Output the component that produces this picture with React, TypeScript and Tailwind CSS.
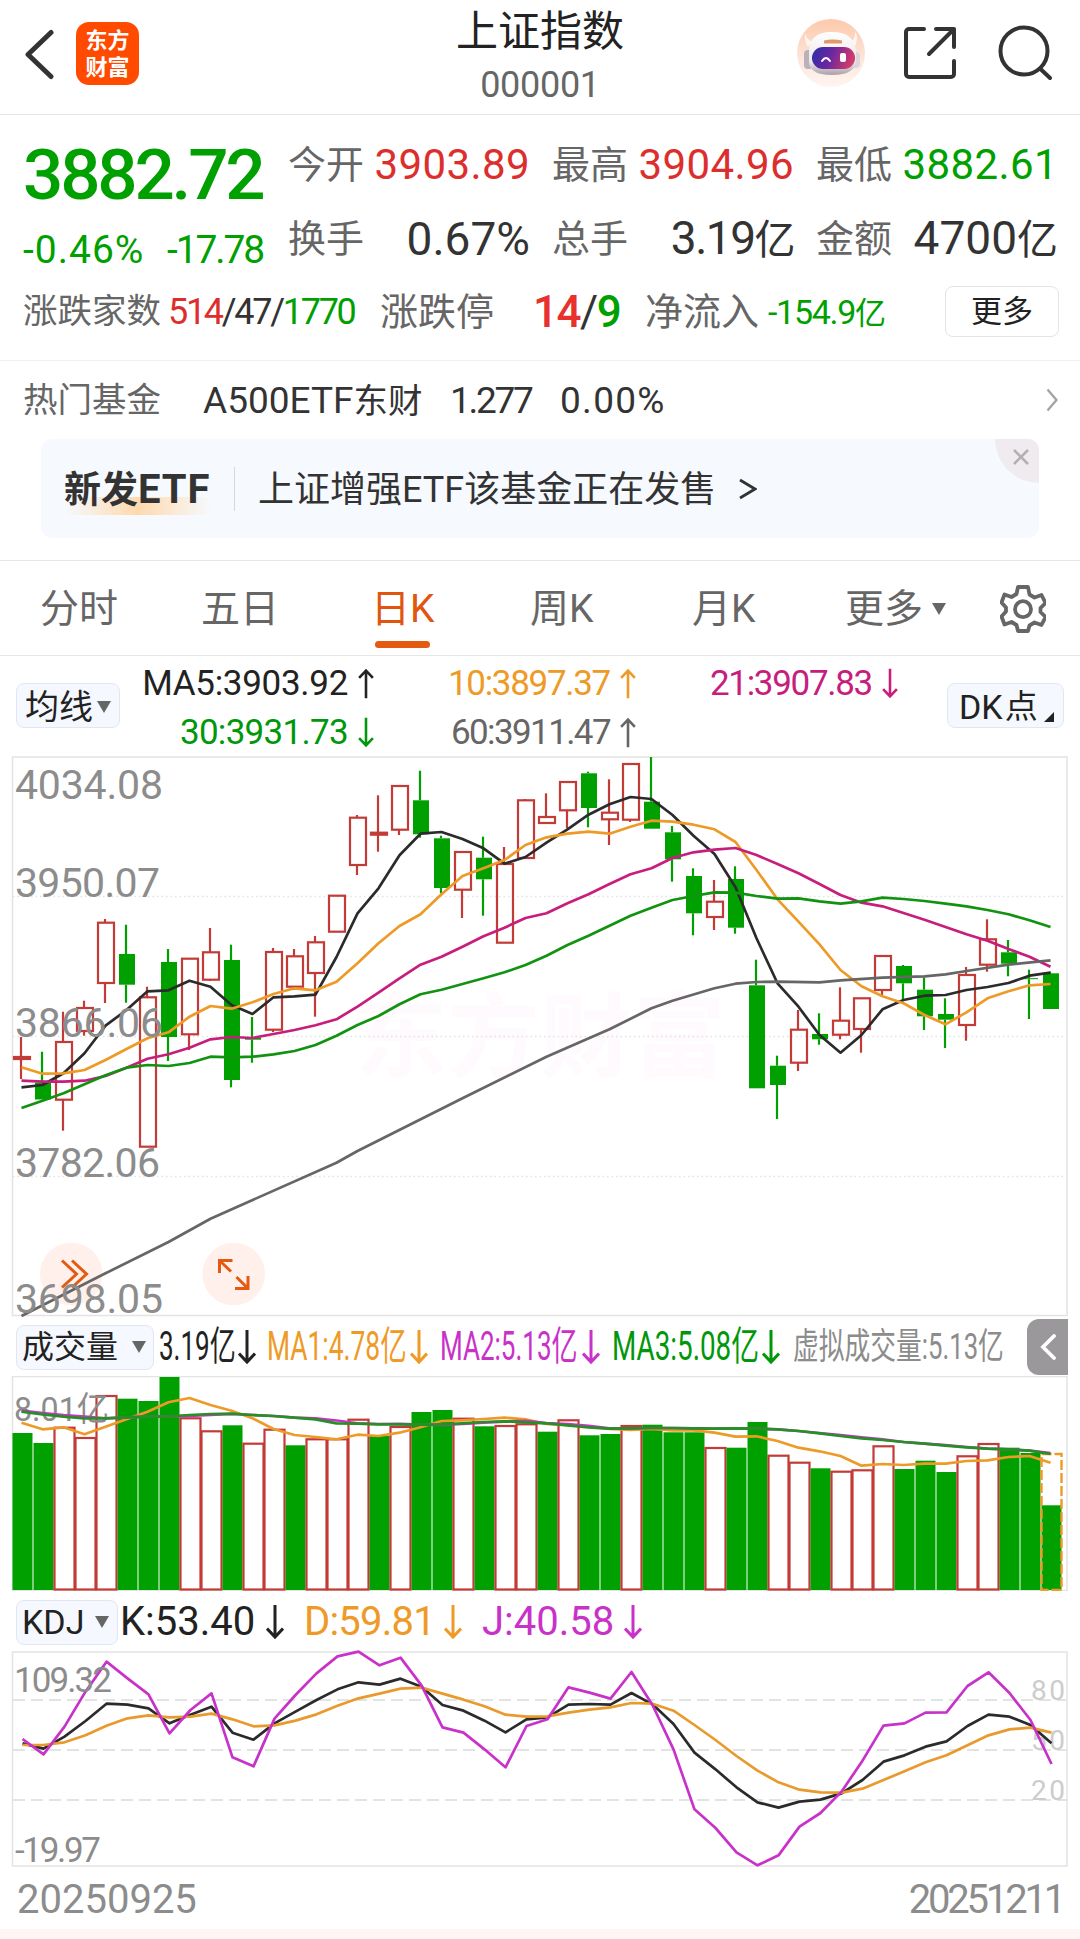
import type { ReactNode } from "react";
import clsx from "clsx";

const GREEN = "#00a000";
const RED = "#c23b37";
const ORANGE = "#ee9a27";
const MAGENTA = "#c71e7d";
const PURPLE = "#c832c8";
const INK = "#2b2b2b";

const STEP = 21;
const centerOf = (i: number) => 21 + i * STEP;

// [direction, body top, body bottom, high, low]
type Candle = ["up" | "down", number, number, number, number];

const candles: Candle[] = [
  ["up", 1057, 1059, 1037, 1079],
  ["down", 1082.7, 1099.5, 1051.7, 1099.5],
  ["up", 1042, 1099.7, 1011.7, 1130.7],
  ["up", 1008, 1031, 1000.7, 1035.7],
  ["up", 922.7, 983, 919, 1003],
  ["down", 954, 984.7, 924.7, 1002.7],
  ["up", 997.3, 1146.7, 986.7, 1146.7],
  ["down", 962, 1037, 949, 1061],
  ["up", 958.7, 1034.3, 958.7, 1050],
  ["up", 952.3, 979.7, 928, 981],
  ["down", 960, 1080, 944.7, 1087.3],
  ["down", 1037.7, 1039.7, 1017, 1062.7],
  ["up", 952, 1029.7, 948, 1032],
  ["up", 956.3, 986.7, 949, 990],
  ["up", 942.3, 973, 936, 1016.7],
  ["up", 895.7, 931.7, 895.7, 931.7],
  ["up", 817.7, 865, 815, 875],
  ["up", 832.7, 834.7, 795.3, 851.7],
  ["up", 786, 829.7, 786, 835],
  ["down", 800.3, 834.3, 770.7, 837.7],
  ["down", 838.3, 888, 835.7, 893.3],
  ["up", 852, 889.7, 851, 918],
  ["down", 857.7, 879.3, 836.7, 915.7],
  ["up", 864, 942.7, 847, 942.7],
  ["up", 800.3, 858, 799, 858],
  ["up", 817, 823, 793.3, 823],
  ["up", 782, 810.3, 782, 828.3],
  ["down", 773.3, 808, 771.7, 827.3],
  ["up", 812.7, 819.3, 779.3, 845],
  ["up", 764, 819.7, 763, 822],
  ["down", 801.7, 828.7, 757, 828.7],
  ["down", 832.3, 859.3, 826, 881.7],
  ["down", 876, 913.3, 868.3, 935.3],
  ["up", 901.7, 917, 880, 930],
  ["down", 879, 927.7, 866.3, 933.7],
  ["down", 985.3, 1088.3, 959.7, 1088.3],
  ["down", 1065.7, 1085, 1055.7, 1119],
  ["up", 1029.7, 1062.7, 1010, 1071],
  ["down", 1034, 1039.3, 1013.3, 1044.7],
  ["up", 1020.7, 1034.7, 987.3, 1039.3],
  ["up", 998.3, 1029, 998.3, 1052.7],
  ["up", 956, 990, 956, 995],
  ["down", 966, 983.3, 965, 999.3],
  ["down", 989.7, 1016.3, 977.3, 1030],
  ["down", 1014, 1019.7, 998.3, 1048],
  ["up", 975, 1025, 967, 1040.7],
  ["up", 939.3, 964.7, 919.3, 971.7],
  ["down", 952.3, 963.7, 940, 976.3],
  ["down", 978.2, 979.2, 969.7, 1019],
  ["down", 973.3, 1009, 971.7, 1009],
];

const ma5 = [
  1087.3, 1085, 1073.3, 1053.3, 1025.7, 1010, 991.3, 990.3, 980.7, 986.7, 1005, 1014, 997.3, 996.3,
  994.7, 957, 913.3, 888.3, 855.3, 833.7, 832, 839, 848.3, 863.7, 857, 842.7, 829.3, 814.7, 804.3,
  797, 799, 815, 835.7, 854, 887.3, 938.3, 983.3, 1006.7, 1035, 1052.7, 1035, 1009.3, 1000, 995.7,
  995, 990, 987, 983, 975.7, 972.7,
];
const ma10 = [
  1067.3, 1073.7, 1073.3, 1070, 1060, 1049, 1038.3, 1032.3, 1016.7, 1006, 1008.7, 1002.3, 994, 988.3,
  990.3, 981.7, 963.3, 943.3, 926, 914.3, 894.3, 876, 868.3, 860, 845, 837.3, 833.7, 831.7, 833.7,
  826.7, 820.7, 821.7, 824.7, 829.3, 842, 870, 899.3, 921.7, 944.3, 970, 986.3, 996.3, 1003.3, 1015,
  1024.3, 1012.3, 998.3, 991.3, 985.3, 984,
];
const ma21 = [
  1080.7, 1081.7, 1081.7, 1080.7, 1076, 1067.7, 1058.7, 1054.3, 1047.7, 1039.3, 1037, 1038, 1034,
  1030, 1025.3, 1019.3, 1006.7, 992.7, 978.3, 964.7, 956.7, 946.7, 936.3, 927.7, 918, 913.3, 903.3,
  894.3, 884, 874.3, 868.3, 858, 852.3, 849.7, 848, 855, 864, 873.3, 884, 895, 902.7, 906.3, 913,
  919.7, 927, 934.3, 940.7, 949, 956.7, 966.7,
];
const ma30 = [
  1108, 1100.7, 1093.3, 1084.3, 1075.3, 1067.7, 1065, 1066, 1063, 1056.7, 1057.3, 1056.7, 1054.3,
  1051, 1045, 1035.7, 1025, 1016, 1004.3, 994.3, 989.7, 984, 978.3, 972.3, 965, 955.7, 945, 935.7,
  925.7, 915.7, 907.7, 900, 896, 892.3, 892.7, 896, 898.7, 898.3, 901.3, 903.7, 901.3, 897.7, 899,
  901, 903.7, 906.3, 910, 914.3, 920.3, 927,
];
// the 60 day average is smooth enough to keep only its turning points
const ma60: [number, number][] = [
  [0, 1316], [4, 1273.3], [7, 1242], [9, 1218.7], [15, 1162.7], [16, 1151], [21, 1098.3],
  [25, 1056.7], [28, 1029.3], [30, 1008.3], [31, 1000.7], [33, 988.3], [34, 983.7], [35, 982],
  [36, 981.7], [38, 982.3], [39, 980.3], [41, 977.7], [43, 976.3], [44, 974.3], [45, 971],
  [47, 964.7], [49, 960.3],
];

const volumeTops = [
  1433, 1443, 1427.7, 1438, 1396, 1398.7, 1401, 1377, 1418.3, 1431.3, 1425.3, 1443.7, 1429.7, 1445.3,
  1439.3, 1439.3, 1419.7, 1436, 1427, 1412, 1410, 1418.7, 1426.3, 1426, 1424.3, 1431.7, 1420.3,
  1435.3, 1434, 1426, 1424.7, 1432.3, 1432.3, 1448, 1447.7, 1422, 1455.7, 1462.7, 1468.3, 1471.7,
  1470.3, 1446.3, 1469, 1460.7, 1472, 1456.3, 1444, 1447.7, 1453, 1505.3,
];
const volumeUp = [
  2, 3, 4, 8, 9, 11, 12, 14, 15, 16, 18, 21, 23, 24, 26, 29, 33, 36, 37, 39, 40, 41, 45, 46,
];
const volMa1 = [
  1422.7, 1429.3, 1427.3, 1434.3, 1426.7, 1419.3, 1411.7, 1402.3, 1398, 1405, 1410.7, 1418.3, 1429,
  1435, 1437, 1439.3, 1434.7, 1436, 1432.7, 1427.3, 1421, 1420.3, 1419, 1417.7, 1419.3, 1424, 1425,
  1426.7, 1429, 1430, 1429, 1430.3, 1430.3, 1432.7, 1436.7, 1436.3, 1441, 1447.7, 1451.3, 1456,
  1465.7, 1464, 1465, 1463.7, 1463.7, 1461, 1460.3, 1457, 1456, 1462.7,
];
const volMa2 = [
  1410.7, 1413, 1415, 1416.5, 1418.3, 1417.3, 1416.7, 1416.3, 1416, 1415, 1414, 1415, 1416, 1417.7,
  1418.3, 1420.5, 1423.3, 1424, 1423.8, 1424.7, 1425, 1424, 1422.6, 1421.6, 1420.8, 1423, 1424,
  1425.8, 1428.3, 1428.3, 1428, 1428, 1428.3, 1428.7, 1428.3, 1428.7, 1429.3, 1431, 1433, 1435,
  1437.3, 1439.4, 1442, 1443.7, 1445.2, 1447, 1448.7, 1449.3, 1450.7, 1453,
];
const volMa3 = [
  1411.7, 1414.3, 1416.7, 1418.3, 1418.3, 1417.3, 1416.7, 1416.3, 1415, 1414, 1413.7, 1415, 1416,
  1417.7, 1419.3, 1423.3, 1423.7, 1424.3, 1424.3, 1424.7, 1424.3, 1423.3, 1422, 1421.3, 1422.3,
  1423.3, 1425.3, 1427.3, 1428.7, 1428.3, 1428, 1428, 1428.3, 1428.7, 1428.3, 1428.7, 1429.3, 1431,
  1433.3, 1436, 1438.3, 1440, 1442, 1443.7, 1445.7, 1447.3, 1448.7, 1449.3, 1450.7, 1454,
];

// KDJ series are kept at three units per pixel, counted from y = 1590
const kLine = [
  460, 476, 440, 393, 341, 344, 355, 400, 374, 350, 428, 449, 400, 365, 330, 298, 277, 284, 266, 290,
  345, 362, 392, 427, 388, 382, 344, 342, 344, 309, 343, 402, 488, 538, 592, 637, 653, 635, 629, 610,
  570, 515, 496, 470, 454, 408, 374, 380, 405, 460,
];
const dLine = [
  465, 465, 457, 436, 407, 385, 376, 382, 380, 371, 388, 409, 406, 392, 373, 347, 325, 311, 296, 293,
  311, 329, 349, 374, 380, 379, 368, 359, 352, 339, 341, 362, 405, 450, 498, 542, 577, 599, 607, 608,
  596, 570, 544, 517, 496, 466, 436, 418, 413, 428,
];
const jLine = [
  447, 493, 410, 305, 215, 265, 313, 430, 360, 310, 502, 529, 386, 315, 250, 199, 185, 226, 203, 286,
  412, 428, 478, 532, 408, 388, 292, 308, 326, 246, 345, 478, 658, 714, 787, 826, 796, 710, 669, 605,
  512, 407, 400, 368, 367, 288, 247, 309, 390, 522,
];

const priceLabels = [
  { text: "4034.08", y: 799, width: 148 },
  { text: "3950.07", y: 897, width: 145 },
  { text: "3866.06", y: 1036.5, width: 148 },
  { text: "3782.06", y: 1177, width: 145 },
  { text: "3698.05", y: 1313, width: 148 },
];

const fromSeries = (ys: number[], dx = 0.5) =>
  ys.map((y, i) => `${centerOf(i) + dx},${y}`).join(" ");
const fromKdj = (ys: number[]) => fromSeries(ys.map((v) => 1590 + v / 3), 1.5);

function Line({ points, color }: { points: string; color: string }) {
  return (
    <polyline points={points} fill="none" stroke={color} strokeWidth={2.7} strokeLinejoin="round" />
  );
}

function Arrow({ up = false, className }: { up?: boolean; className?: string }) {
  return (
    <svg
      viewBox="0 0 18 36"
      className={clsx("w-[18px] shrink-0", up && "rotate-180", className)}
      fill="none"
      stroke="currentColor"
      strokeWidth={3}
      aria-hidden="true"
    >
      <path d="M9 1v32M1 24.500l8 8.500 8-8.500" />
    </svg>
  );
}

function Caret({ className }: { className?: string }) {
  return (
    <svg viewBox="0 0 14 12" className={clsx("h-3 w-3.5 shrink-0 fill-[#666]", className)} aria-hidden="true">
      <path d="M0 0h14L7 12z" />
    </svg>
  );
}

function Header() {
  return (
    <header className="flex h-[115px] items-start border-b border-[#e3e4e8]">
      <div className="flex w-[456px] items-center pt-[22px] pl-6">
        <svg viewBox="0 0 32 52" className="h-[52px] w-8" fill="none" stroke="#333" strokeWidth={5} strokeLinecap="round" strokeLinejoin="round">
          <path d="M27 4.500L4 26.500l23 22" />
        </svg>
        <div className="ml-5 flex h-[63px] w-[63px] flex-col items-center justify-center gap-[4px] rounded-[13px] bg-[#ff4a00] text-[22px] leading-[23px] font-bold text-white">
          <span>东方</span>
          <span>财富</span>
        </div>
      </div>
      <div className="flex w-[168px] flex-col items-center">
        <h1 className="mt-[10px] text-[42px] leading-[44px] whitespace-nowrap text-[#222]">上证指数</h1>
        <span className="mt-[10px] text-[36px] leading-[42px] tracking-[-0.3px] text-[#666]">000001</span>
      </div>
      <div className="flex flex-1 items-center pt-[18px] pl-[173px]">
        <Mascot />
        <svg viewBox="0 0 54 54" className="ml-[38px] h-[54px] w-[54px]" fill="none" stroke="#333" strokeWidth={4} strokeLinecap="round" strokeLinejoin="round">
          <path d="M21 3H6a3 3 0 0 0-3 3v42a3 3 0 0 0 3 3h42a3 3 0 0 0 3-3V35M33 3h18v18M51 3L26 28" />
        </svg>
        <svg viewBox="0 0 56 56" className="ml-[41px] h-14 w-14" fill="none" stroke="#333" strokeWidth={4} strokeLinecap="round">
          <circle cx="26" cy="26" r="23.500" />
          <path d="M42.500 44l9.500 9" />
        </svg>
      </div>
    </header>
  );
}

function Mascot() {
  return (
    <svg viewBox="0 0 68 70" className="h-[70px] w-[68px]" aria-hidden="true">
      <defs>
        <linearGradient id="halo" x1="0" y1="0" x2="0" y2="1">
          <stop offset="0" stopColor="#fdc9ab" />
          <stop offset="0.600" stopColor="#fde6dc" />
          <stop offset="1" stopColor="#fff5f1" />
        </linearGradient>
        <linearGradient id="visor" x1="0" y1="0" x2="1" y2="0.200">
          <stop offset="0" stopColor="#2a2fa8" />
          <stop offset="0.500" stopColor="#6a27a0" />
          <stop offset="1" stopColor="#d03a6c" />
        </linearGradient>
        <linearGradient id="helmet" x1="0" y1="0" x2="0" y2="1">
          <stop offset="0" stopColor="#ffffff" />
          <stop offset="0.700" stopColor="#ece6ea" />
          <stop offset="1" stopColor="#a9a0a8" />
        </linearGradient>
      </defs>
      <circle cx="34" cy="35" r="34" fill="url(#halo)" />
      <path d="M8 15q1 6 7 9l-4 5q-4-6-3-14zM58 13q1 7-4 11l4 4q4-8 0-15z" fill="#fff6f1" />
      <rect x="7" y="32" width="9" height="19" rx="4" fill="#b9b1bc" />
      <rect x="55" y="34" width="8" height="16" rx="4" fill="#ddd5dc" />
      <path d="M12 34q0-20 23-20t24 20v8q0 15-24 15T12 42z" fill="url(#helmet)" />
      <path d="M27 22.500q8-2 18 0v3H27z" fill="#dd9b6c" />
      <rect x="15" y="29" width="43" height="22" rx="11" fill="url(#visor)" />
      <path d="M25 43q4-6 8 0" fill="none" stroke="#fff" strokeWidth="2" strokeLinecap="round" />
      <rect x="43" y="35" width="6" height="9" rx="2" fill="#fff" />
    </svg>
  );
}

function Stat({ label, children, className }: { label: string; children: ReactNode; className: string }) {
  return (
    <div className="flex h-[46px] w-[242px] items-center justify-between whitespace-nowrap">
      <span className="text-[38px] leading-none text-[#666]">{label}</span>
      <span className={clsx("leading-[46px]", className)}>{children}</span>
    </div>
  );
}

function Quote() {
  return (
    <section className="h-[246px] border-b border-[#f0f0f0]">
      <div className="flex h-[171px]">
        <div className="w-72 pt-[20px] pl-[23px] whitespace-nowrap text-[#00a000]">
          <div className="text-[71px] leading-[80px] font-medium tracking-[-3.2px]">3882.72</div>
          <div className="mt-[15px] flex text-[39px] leading-10">
            <span className="w-[144px] tracking-[1px]">-0.46%</span>
            <span className="tracking-[-2.1px]">-17.78</span>
          </div>
        </div>
        <div className="grid grid-cols-3 content-start gap-x-[22px] gap-y-7 pt-[27px]">
          <Stat label="今开" className="text-[42px] tracking-[0.4px] text-[#dc2f2d]">3903.89</Stat>
          <Stat label="最高" className="text-[42px] tracking-[0.4px] text-[#dc2f2d]">3904.96</Stat>
          <Stat label="最低" className="text-[42px] tracking-[0.4px] text-[#00a000]">3882.61</Stat>
          <Stat label="换手" className="text-[46px] text-[#333]">0.67%</Stat>
          <Stat label="总手" className="text-[46px] tracking-[-1.5px] text-[#333]">
            3.19<span className="text-[41px]">亿</span>
          </Stat>
          <Stat label="金额" className="text-[46px] text-[#333]">
            4700<span className="text-[41px]">亿</span>
          </Stat>
        </div>
      </div>
      <div className="flex h-[51px] items-center pl-[23px] leading-none whitespace-nowrap text-[#666]">
        <span className="w-[145px] text-[34.5px]">涨跌家数</span>
        <span className="w-[212px] text-[36px] tracking-[-2.3px]">
          <span className="text-[#dc2f2d]">514</span>
          <span className="text-[#333]">/47/</span>
          <span className="text-[#00a000]">1770</span>
        </span>
        <span className="w-[153px] text-[38px]">涨跌停</span>
        <span className="w-[112px] text-[44px] font-medium tracking-[-1.5px]">
          <span className="text-[#e8302d]">14</span>
          <span className="font-normal text-[#333]">/</span>
          <span className="text-[#00a000]">9</span>
        </span>
        <span className="w-[123px] text-[38px]">净流入</span>
        <span className="w-[177px] text-[34px] tracking-[-1.3px] text-[#00a000]">
          -154.9<span className="text-[31px]">亿</span>
        </span>
        <button className="h-[51px] w-[114px] rounded-lg border border-[#e4e4e6] text-[31px] leading-none text-[#222]">
          更多
        </button>
      </div>
    </section>
  );
}

function FundRow() {
  return (
    <div className="flex h-[78px] items-center pr-[22px] pl-[23px] text-[37px] leading-none whitespace-nowrap text-[#333]">
      <span className="w-[180px] text-[34.5px] text-[#666]">热门基金</span>
      <span className="w-[247px]">
        A500ETF<span className="text-[34.5px]">东财</span>
      </span>
      <span className="w-[110px] tracking-[-2.3px]">1.277</span>
      <span className="tracking-[1.3px]">0.00%</span>
      <svg viewBox="0 0 12 24" className="ml-auto h-6 w-3" fill="none" stroke="#a3a3a3" strokeWidth={2.4}>
        <path d="M1.500 1.500L10.500 12l-9 10.500" />
      </svg>
    </div>
  );
}

function Banner() {
  return (
    <div className="relative mx-[41px] flex h-[99px] items-center overflow-hidden rounded-[11px] bg-[#f6faff] pl-[23px] text-[#333]">
      <div className="absolute top-[58px] left-[23px] h-[18px] w-[148px] bg-[linear-gradient(90deg,transparent,#ffd9ae_50%,transparent)]" />
      <span className="relative w-[170px] pt-0.5 text-[40px] leading-none font-bold tracking-[0.9px] whitespace-nowrap">
        <span className="text-[37px] tracking-normal">新发</span>ETF
      </span>
      <span className="h-11 w-px bg-[#d5d8dd]" />
      <span className="ml-[23px] pt-0.5 text-[36px] leading-none whitespace-nowrap">上证增强ETF该基金正在发售</span>
      <svg viewBox="0 0 18 22" className="ml-[23px] h-[22px] w-[18px]" fill="none" stroke="#333" strokeWidth={2.8}>
        <path d="M1 2l15 9-15 9" />
      </svg>
      <button className="absolute top-0 right-0 flex h-11 w-11 justify-end rounded-bl-[44px] bg-[#efebef] pt-[10px] pr-[10px]">
        <svg viewBox="0 0 16 16" className="h-4 w-4" fill="none" stroke="#b3b0b5" strokeWidth={2.6}>
          <path d="M1 1l14 14M15 1L1 15" />
        </svg>
      </button>
    </div>
  );
}

function PeriodTabs() {
  return (
    <nav className="mt-[22px] grid h-[96px] grid-cols-[161px_170px_159px_162px_153px_155px_1fr] items-center border-y border-[#e6e6e6] pt-[2px] pl-[40px] text-[39px] leading-none whitespace-nowrap text-[#666]">
      <span>分时</span>
      <span>五日</span>
      <span className="relative text-[#e0560f]">
        日K
        <i className="absolute top-[51px] left-[4px] h-[7px] w-[55px] rounded-full bg-[#e35a10]" />
      </span>
      <span>周K</span>
      <span>月K</span>
      <span className="flex items-center">
        更多
        <Caret className="ml-[9px]" />
      </span>
      <svg viewBox="0 0 46 48" className="h-12 w-[46px]" fill="none" stroke="#666" strokeWidth={3.8}>
        <path d="M18 2h10l1.500 7.500 5 3 7-2.500 4 8-5 5v4l5 5-4 8-7-2.500-5 3L28 46H18l-1.500-6-5-3L4.500 39.500l-3-8 4.500-5v-4l-4.500-5 3-8 7 2.500 5-3z" strokeLinejoin="round" />
        <circle cx="23" cy="24.200" r="8" />
      </svg>
    </nav>
  );
}

function Average({ text, up, className }: { text: string; up?: boolean; className: string }) {
  return (
    <div className={clsx("flex items-center justify-end", className)}>
      {text}
      <Arrow up={up} className="ml-[9px] h-[31px]" />
    </div>
  );
}

const pill = "flex h-[45px] items-center rounded-lg border border-[#e1e7f1] bg-[#f5f9ff] leading-none whitespace-nowrap text-[#222]";

function AverageRow() {
  return (
    <div className="flex h-[100px] pl-4">
      <div className={clsx(pill, "mt-[27px] w-[104px] pt-0.5 pl-[8px] text-[34px]")}>
        均线
        <Caret className="ml-[4px]" />
      </div>
      <div className="grid h-[98px] grid-cols-[255px_262px_262px] content-start pt-[3px] text-[35px] leading-[49px] whitespace-nowrap">
        <Average text="MA5:3903.92" up className="tracking-[-0.3px] text-[#222]" />
        <Average text="10:3897.37" up className="tracking-[-1.3px] text-[#ee9a27]" />
        <Average text="21:3907.83" className="tracking-[-1.3px] text-[#c71e7d]" />
        <Average text="30:3931.73" className="tracking-[-0.7px] text-[#00980a]" />
        <Average text="60:3911.47" up className="tracking-[-1.6px] text-[#666]" />
      </div>
      <div className={clsx(pill, "mt-[27px] ml-[48px] w-[117px] pt-0.5 pl-[11px] text-[34px]")}>
        DK<span className="ml-[2px] text-[33px]">点</span>
        <svg viewBox="0 0 10 10" className="mt-5 ml-[6px] h-2.5 w-2.5 fill-[#222]">
          <path d="M10 0v10H0z" />
        </svg>
      </div>
    </div>
  );
}

function CandleMark({ candle, x }: { candle: Candle; x: number }) {
  const [dir, top, bottom, high, low] = candle;
  const color = dir === "up" ? RED : GREEN;
  return (
    <g stroke={color} strokeWidth={2.2}>
      {high < top && <path d={`M${x} ${high}V${top}`} />}
      {low > bottom && <path d={`M${x} ${bottom}V${low}`} />}
      {dir === "up" ? (
        <rect x={x - 7} y={top} width={16} height={bottom - top} fill="none" />
      ) : (
        <rect x={x - 7} y={top} width={16} height={bottom - top} fill={color} stroke="none" />
      )}
    </g>
  );
}

function PriceChart() {
  return (
    <svg viewBox="0 756 1080 560" className="block h-[560px] w-[1080px] overflow-visible">
      <text x="355" y="1070" textLength="370" className="fill-[#fefafd] text-[92px] font-bold">
        东方财富
      </text>
      <rect x="12.500" y="757" width="1054.500" height="558.500" fill="none" stroke="#e3e3e3" strokeWidth="1.500" />
      {[896.5, 1036.5, 1176.5].map((y) => (
        <path key={y} d={`M13 ${y}H1067`} stroke="#e2e2e2" strokeWidth="1.500" strokeDasharray="1.500 3" />
      ))}
      {candles.map((candle, i) => (
        <CandleMark key={i} candle={candle} x={centerOf(i)} />
      ))}
      <circle cx="71.300" cy="1274" r="31.300" fill="#fff0eb" />
      <circle cx="233.700" cy="1274" r="31.300" fill="#fff0eb" />
      <Line points={fromSeries(ma5)} color={INK} />
      <Line points={fromSeries(ma10)} color={ORANGE} />
      <Line points={fromSeries(ma21)} color={MAGENTA} />
      <Line points={fromSeries(ma30)} color="#119311" />
      <Line points={ma60.map(([i, y]) => `${centerOf(i) + 0.5},${y}`).join(" ")} color="#666" />
      <g fill="none" stroke="#e35a10" strokeWidth="3">
        <path d="M62 1260.500L76.500 1274 62 1287.500M72 1260.500L86.500 1274 72 1287.500" />
        <path d="M219.500 1273v-12.500h13M219.500 1260.500l11.500 11M248 1276v12.500h-13M248 1288.500L236.500 1277" />
      </g>
      {priceLabels.map((label) => (
        <text key={label.text} x="15" y={label.y} textLength={label.width} className="fill-[#8c8c8c] text-[41px]">
          {label.text}
        </text>
      ))}
    </svg>
  );
}

/** Condensed reading with a trend arrow, as used above the volume bars. */
function VolumeItem({ text, className, scale }: { text: string; className: string; scale: string }) {
  return (
    <div className={clsx("flex shrink-0 items-center", className)}>
      <span className={clsx("w-0 flex-1 origin-left whitespace-nowrap", scale)}>{text}</span>
      <Arrow className="h-9" />
    </div>
  );
}

function VolumeRow() {
  return (
    <div className="flex h-[60px] items-center pt-0.5 pl-4 text-[40px] leading-none">
      <div className={clsx(pill, "w-[138px] shrink-0 justify-between pr-[7px] pl-[5px] text-[32px]")}>
        成交量
        <Caret />
      </div>
      <VolumeItem text="3.19亿" className="ml-[5px] w-[97px] text-[#222]" scale="scale-x-[0.65]" />
      <VolumeItem text="MA1:4.78亿" className="ml-[11px] w-[161px] text-[#ee9a27]" scale="scale-x-[0.66]" />
      <VolumeItem text="MA2:5.13亿" className="ml-[12px] w-[160px] text-[#c832c8]" scale="scale-x-[0.65]" />
      <VolumeItem text="MA3:5.08亿" className="ml-[12px] w-[168px] text-[#00980a]" scale="scale-x-[0.695]" />
      <span className="ml-[13px] w-0 flex-1 origin-left scale-x-[0.715] text-[36px] whitespace-nowrap text-[#8c8c8c]">
        虚拟成交量:5.13亿
      </span>
      <button className="mr-3 flex h-14 w-[41px] shrink-0 items-center justify-center rounded-l-xl bg-[#9b989c]">
        <svg viewBox="0 0 16 26" className="h-[26px] w-4" fill="none" stroke="#fff" strokeWidth={3.8} strokeLinecap="round">
          <path d="M14 2L3 13l11 11" />
        </svg>
      </button>
    </div>
  );
}

function VolumeChart() {
  return (
    <svg viewBox="0 1376 1080 215" className="block h-[215px] w-[1080px]">
      <rect x="12.500" y="1376.500" width="1054.500" height="214" fill="none" stroke="#e3e3e3" strokeWidth="1.500" />
      {volumeTops.map((top, i) =>
        volumeUp.includes(i) ? (
          <rect key={i} x={12.5 + i * STEP} y={top} width={20} height={1589.5 - top} fill="#fff" stroke={RED} strokeWidth={2.2} />
        ) : (
          <rect key={i} x={12.5 + i * STEP} y={top} width={20} height={1590 - top} fill={GREEN} />
        ),
      )}
      <rect x="1041.500" y="1454" width="20" height="136" fill="none" stroke={ORANGE} strokeWidth="2.400" strokeDasharray="10 3" />
      <text x="14" y="1421" textLength="95" lengthAdjust="spacingAndGlyphs" className="fill-[#8c8c8c] text-[34px]">
        8.01亿
      </text>
      <Line points={fromSeries(volMa1)} color={ORANGE} />
      <Line points={fromSeries(volMa2)} color={PURPLE} />
      <Line points={fromSeries(volMa3)} color="#259025" />
    </svg>
  );
}

function KdjRow() {
  return (
    <div className="flex h-[60px] items-center pt-0.5 pl-4 text-[40px] leading-none whitespace-nowrap">
      <div className={clsx(pill, "w-[102px] justify-between pr-2 pl-[5px] text-[34px]")}>
        KDJ
        <Caret />
      </div>
      <span className="flex w-[185px] items-center pl-[2px] text-[#222]">
        <span className="w-[146px]">K:53.40</span>
        <Arrow className="h-9" />
      </span>
      <span className="flex w-[179px] items-center pl-[1px] tracking-[-0.8px] text-[#ee9a27]">
        <span className="w-[140px]">D:59.81</span>
        <Arrow className="h-9" />
      </span>
      <span className="flex items-center text-[#c832c8]">
        <span className="w-[142px]">J:40.58</span>
        <Arrow className="h-9" />
      </span>
    </div>
  );
}

function KdjChart() {
  const levels = [
    { value: "80", y: 1700 },
    { value: "50", y: 1750 },
    { value: "20", y: 1800 },
  ];
  return (
    <svg viewBox="0 1651 1080 216" className="block h-[216px] w-[1080px] overflow-visible">
      <rect x="12.500" y="1652" width="1054.500" height="214" fill="none" stroke="#e3e3e3" strokeWidth="1.500" />
      {levels.map(({ value, y }) => (
        <g key={value}>
          <path d={`M13 ${y}H1067`} stroke="#e3e3e3" strokeWidth="1.800" strokeDasharray="12 6" />
          <text x="1031" y={y} textLength="34" className="fill-[#cccccc] text-[28px]">
            {value}
          </text>
        </g>
      ))}
      <Line points={fromKdj(kLine)} color={INK} />
      <Line points={fromKdj(dLine)} color="#e99a2c" />
      <Line points={fromKdj(jLine)} color={PURPLE} />
      <text x="14" y="1692" textLength="98" className="fill-[#8c8c8c] text-[35px]">
        109.32
      </text>
      <text x="15" y="1861.500" textLength="86" className="fill-[#8c8c8c] text-[35px]">
        -19.97
      </text>
    </svg>
  );
}

export default function App() {
  return (
    <main className="h-[1939px] w-[1080px] overflow-hidden bg-white font-['Roboto','Noto_Sans_CJK_SC',sans-serif]">
      <Header />
      <Quote />
      <FundRow />
      <Banner />
      <PeriodTabs />
      <AverageRow />
      <PriceChart />
      <VolumeRow />
      <VolumeChart />
      <KdjRow />
      <KdjChart />
      <div className="flex h-[62px] items-center justify-between pt-[3px] pr-[20px] pl-[17px] text-[40px] leading-none text-[#8c8c8c]">
        <span>20250925</span>
        <span className="mr-[-3px] tracking-[-3.2px]">20251211</span>
      </div>
      <div className="h-2.5 bg-[#fff5f5]" />
    </main>
  );
}
